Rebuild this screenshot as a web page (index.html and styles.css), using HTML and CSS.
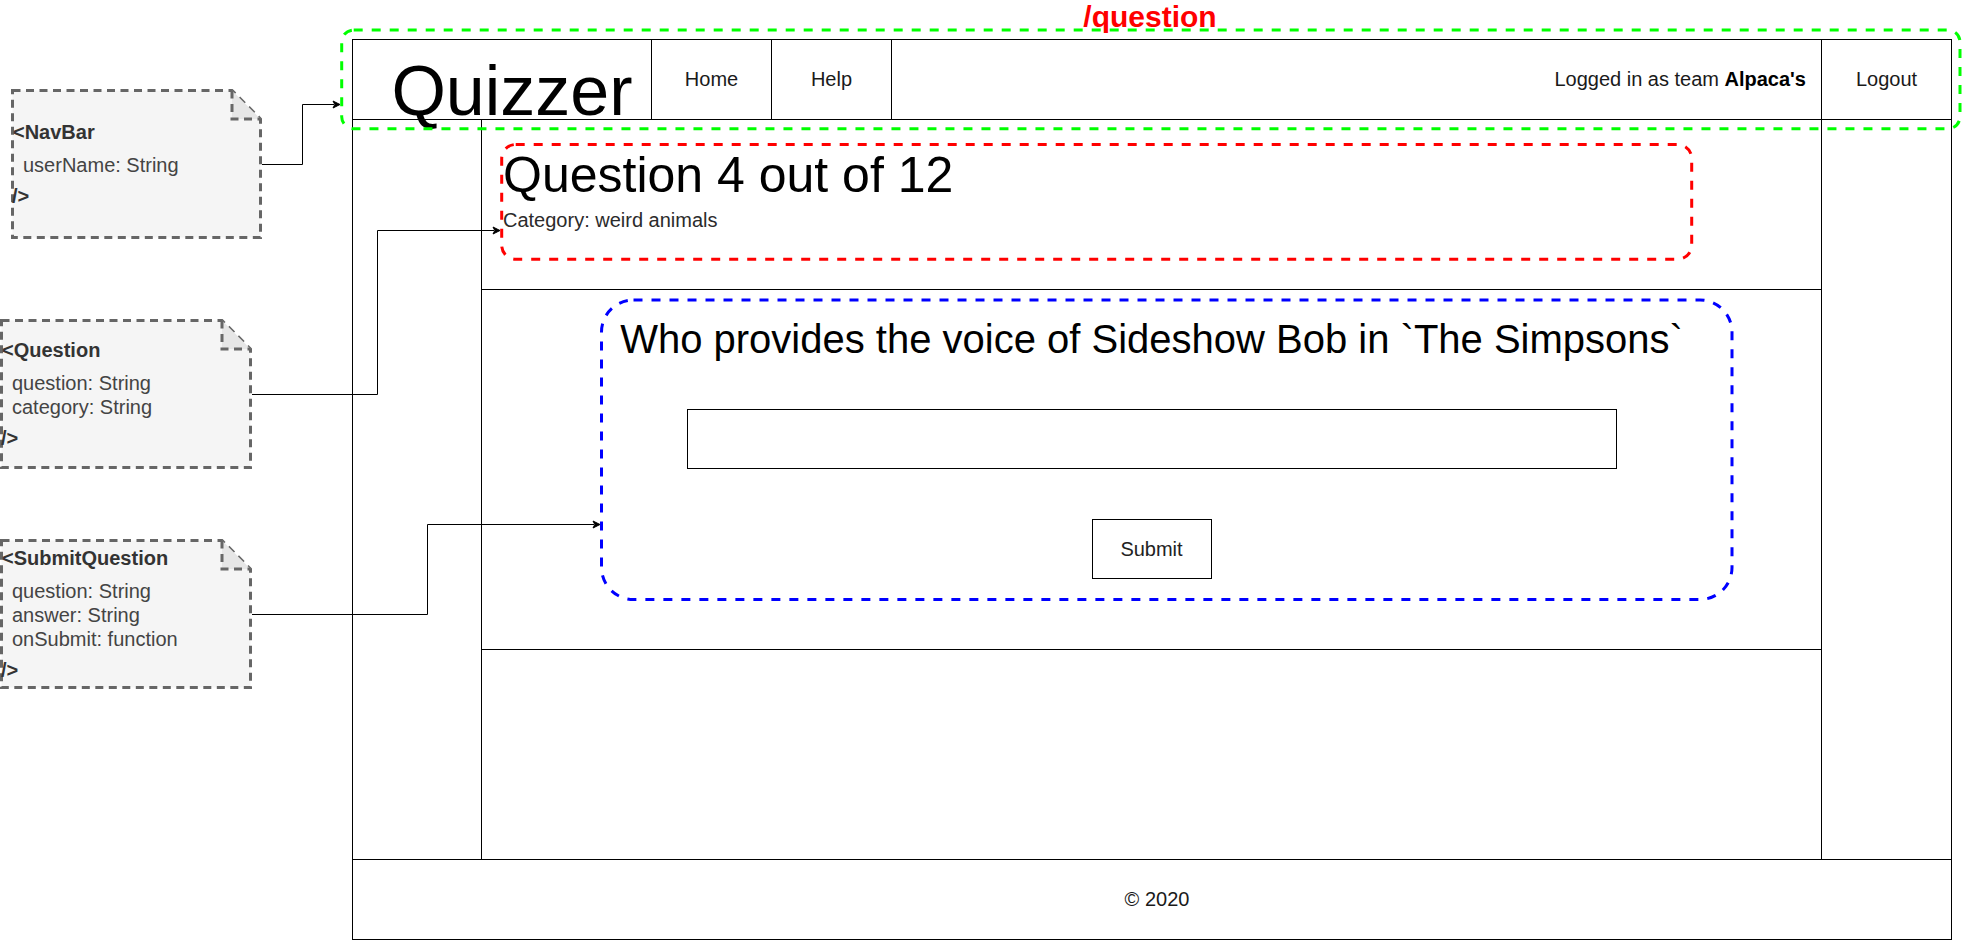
FILE: index.html
```html
<!DOCTYPE html>
<html lang="en">
<head>
<meta charset="utf-8">
<title>Quizzer – /question wireframe</title>
<link rel="stylesheet" href="styles.css">
</head>
<body>
<div class="canvas">
  <div class="frame">
    <nav class="nav">
      <div class="brand">Quizzer</div>
      <div class="nav-link">Home</div>
      <div class="nav-link">Help</div>
      <div class="user">Logged in as team&nbsp;<b>Alpaca's</b></div>
      <div class="nav-link logout">Logout</div>
    </nav>
    <div class="body">
      <aside class="side side-left"></aside>
      <main class="main">
        <section class="q-head">
          <h1 class="q-title">Question 4 out of 12</h1>
          <p class="q-category">Category: weird animals</p>
        </section>
        <section class="q-form">
          <h2 class="q-text">Who provides the voice of Sideshow Bob in `The Simpsons`</h2>
          <input class="answer" type="text" aria-label="answer">
          <button class="submit" type="button">Submit</button>
        </section>
        <section class="q-rest"></section>
      </main>
      <aside class="side side-right"></aside>
    </div>
    <footer class="footer">© 2020</footer>
  </div>

  <div class="note note-nav">
    <svg class="note-shape" width="251" height="150" viewBox="0 0 251 150">
      <path class="note-bg" d="M1.5 1.5 H221 L249.5 30 V148.5 H1.5 Z"/>
      <path class="note-fold" d="M221 1.5 L249.5 30 H221 Z"/>
      <path class="note-line" d="M221 1.5 V30 H249.5"/>
    </svg>
    <div class="note-body">
      <div class="note-title">&lt;NavBar</div>
      <div class="note-attrs">
        <div>userName: String</div>
      </div>
      <div class="note-end">/&gt;</div>
    </div>
  </div>

  <div class="note note-question">
    <svg class="note-shape" width="252" height="150" viewBox="0 0 252 150">
      <path class="note-bg" d="M1.5 1.5 H222 L250.5 30 V148.5 H1.5 Z"/>
      <path class="note-fold" d="M222 1.5 L250.5 30 H222 Z"/>
      <path class="note-line" d="M222 1.5 V30 H250.5"/>
    </svg>
    <div class="note-body">
      <div class="note-title">&lt;Question</div>
      <div class="note-attrs">
        <div>question: String</div>
        <div>category: String</div>
      </div>
      <div class="note-end">/&gt;</div>
    </div>
  </div>

  <div class="note note-submit">
    <svg class="note-shape" width="252" height="150" viewBox="0 0 252 150">
      <path class="note-bg" d="M1.5 1.5 H222 L250.5 30 V148.5 H1.5 Z"/>
      <path class="note-fold" d="M222 1.5 L250.5 30 H222 Z"/>
      <path class="note-line" d="M222 1.5 V30 H250.5"/>
    </svg>
    <div class="note-body">
      <div class="note-title">&lt;SubmitQuestion</div>
      <div class="note-attrs">
        <div>question: String</div>
        <div>answer: String</div>
        <div>onSubmit: function</div>
      </div>
      <div class="note-end">/&gt;</div>
    </div>
  </div>

  <svg class="overlay" width="1963" height="940" viewBox="0 0 1963 940">
    <rect class="hl hl-green" x="341.7" y="30" width="1618.3" height="98.7" rx="12"/>
    <rect class="hl hl-red" x="501.7" y="144.5" width="1190" height="114.8" rx="14"/>
    <rect class="hl hl-blue" x="601.5" y="300" width="1130.5" height="299.5" rx="32"/>
    <path class="wire" d="M262 164.5 H302.5 V104.5 H334"/>
    <path class="arrow" d="M340 104.5 L333 101 L334.8 104.5 L333 108 Z"/>
    <path class="wire" d="M252 394.5 H377.5 V230.5 H494"/>
    <path class="arrow" d="M500 230.5 L493 227 L494.8 230.5 L493 234 Z"/>
    <path class="wire" d="M252 614.5 H427.5 V524.5 H594"/>
    <path class="arrow" d="M600 524.5 L593 521 L594.8 524.5 L593 528 Z"/>
  </svg>

  <div class="route-label">/question</div>
</div>
</body>
</html>
```

FILE: styles.css
```css
html, body {
  margin: 0;
  padding: 0;
  background: #ffffff;
  overflow: hidden;
}

body {
  font-family: "Liberation Sans", Arial, sans-serif;
  color: #1a1a1a;
}

.canvas {
  position: relative;
  width: 1963px;
  height: 940px;
  padding: 39px 0 0 352px;
  box-sizing: border-box;
}

/* ---------- wireframe ---------- */
.frame {
  width: 1600px;
  height: 901px;
  border: 1px solid #000;
  box-sizing: border-box;
  display: flex;
  flex-direction: column;
  background: #fff;
}

.nav {
  display: flex;
  height: 80px;
  flex: 0 0 80px;
  border-bottom: 1px solid #000;
  box-sizing: border-box;
}

.brand {
  flex: 0 0 299px;
  border-right: 1px solid #000;
  box-sizing: border-box;
  padding: 16px 0 0 20px;
  font-size: 70px;
  line-height: 70px;
  text-align: center;
  color: #000;
  white-space: nowrap;
}

.nav-link {
  flex: 0 0 120px;
  border-right: 1px solid #000;
  box-sizing: border-box;
  display: flex;
  align-items: center;
  justify-content: center;
  font-size: 20px;
  color: #1a1a1a;
}

.user {
  flex: 1 1 auto;
  border-right: 1px solid #000;
  box-sizing: border-box;
  display: flex;
  align-items: center;
  justify-content: flex-end;
  padding-right: 15px;
  font-size: 20px;
  color: #1a1a1a;
  white-space: nowrap;
}

.user b {
  color: #000;
}

.nav-link.logout {
  flex: 0 0 129px;
  border-right: none;
}

.body {
  display: flex;
  flex: 0 0 739px;
  height: 739px;
}

.side {
  flex: 0 0 129px;
  box-sizing: border-box;
}

.side-left {
  border-right: 1px solid #000;
}

.main {
  flex: 1 1 auto;
  border-right: 1px solid #000;
  box-sizing: border-box;
  display: flex;
  flex-direction: column;
}

.q-head {
  flex: 0 0 170px;
  border-bottom: 1px solid #000;
  box-sizing: border-box;
  padding: 30px 0 0 21px;
}

.q-title {
  margin: 0;
  font-size: 50px;
  line-height: 50px;
  font-weight: normal;
  color: #000;
}

.q-category {
  margin: 10px 0 0;
  font-size: 20px;
  line-height: 20px;
  color: #2b2b2b;
}

.q-form {
  flex: 0 0 360px;
  border-bottom: 1px solid #000;
  box-sizing: border-box;
  display: flex;
  flex-direction: column;
  align-items: center;
  padding-top: 29px;
}

.q-text {
  margin: 0;
  font-size: 40px;
  line-height: 40px;
  font-weight: normal;
  color: #000;
  white-space: nowrap;
}

.answer {
  margin-top: 50px;
  width: 930px;
  height: 60px;
  border: 1px solid #000;
  border-radius: 0;
  box-sizing: border-box;
  padding: 0 10px;
  background: #fff;
  font: 20px "Liberation Sans", Arial, sans-serif;
  outline: none;
}

.submit {
  margin-top: 50px;
  width: 120px;
  height: 60px;
  border: 1px solid #000;
  border-radius: 0;
  background: #fff;
  box-sizing: border-box;
  padding: 0;
  font: 20px "Liberation Sans", Arial, sans-serif;
  color: #222;
}

.q-rest {
  flex: 1 1 auto;
}

.footer {
  flex: 0 0 80px;
  border-top: 1px solid #000;
  box-sizing: border-box;
  display: flex;
  align-items: center;
  justify-content: center;
  padding-left: 10px;
  font-size: 20px;
  color: #1a1a1a;
}

/* ---------- annotation notes ---------- */
.note {
  position: absolute;
  width: 252px;
  height: 150px;
  display: flex;
  flex-direction: column;
  justify-content: center;
  font-size: 20px;
}

.note-nav {
  left: 11px;
  top: 89px;
  width: 251px;
}

.note-question {
  left: 0;
  top: 319px;
}

.note-submit {
  left: 0;
  top: 539px;
}

.note-shape {
  position: absolute;
  left: 0;
  top: 0;
}

.note-bg {
  fill: #f5f5f5;
  stroke: #666666;
  stroke-width: 3;
  stroke-dasharray: 8 5.5;
}

.note-fold {
  fill: #e6e6e6;
  stroke: none;
}

.note-line {
  fill: none;
  stroke: #666666;
  stroke-width: 3;
  stroke-dasharray: 8 5.5;
}

.note-body {
  position: relative;
  display: flex;
  flex-direction: column;
}

.note-title {
  padding-left: 2px;
  line-height: 24px;
  font-weight: bold;
  color: #333;
  margin-bottom: 9px;
  white-space: nowrap;
}

.note-attrs {
  padding-left: 12px;
  line-height: 24px;
  color: #444;
  white-space: nowrap;
}

.note-end {
  padding-left: 1px;
  margin-top: 7px;
  line-height: 24px;
  font-weight: bold;
  color: #333;
}

/* ---------- overlay: highlight boxes & connectors ---------- */
.overlay {
  position: absolute;
  left: 0;
  top: 0;
  pointer-events: none;
}

.hl {
  fill: none;
  stroke-width: 3;
  stroke-dasharray: 9 9;
}

.hl-green { stroke: #00ff00; }
.hl-red { stroke: #ff0000; }
.hl-blue { stroke: #0000ff; }

.wire {
  fill: none;
  stroke: #000;
  stroke-width: 1;
}

.arrow {
  fill: #000;
  stroke: #000;
  stroke-width: 1;
  stroke-linejoin: miter;
}

.route-label {
  position: absolute;
  left: 1050px;
  top: 0;
  width: 200px;
  text-align: center;
  font-size: 30px;
  line-height: 34px;
  font-weight: bold;
  color: #ff0000;
}
```
